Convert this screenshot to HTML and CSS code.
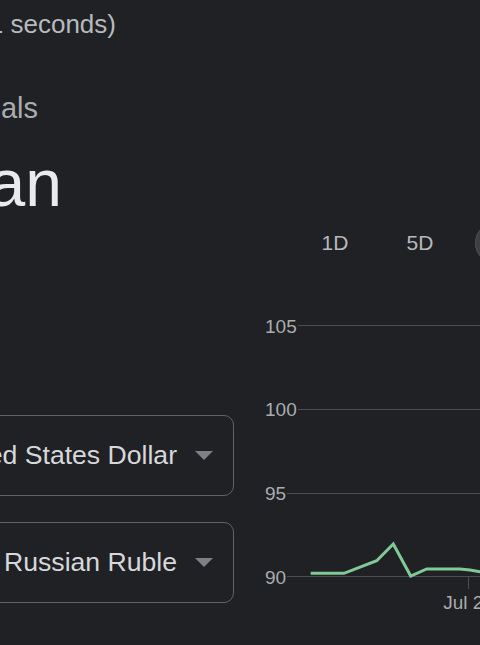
FILE: index.html
```html
<!DOCTYPE html>
<html>
<head>
<meta charset="utf-8">
<link rel="stylesheet" href="styles.css">
</head>
<body>
<div class="page">
  <div class="left">
    <div class="line stats"><span>About 1,240 results (0.41 seconds)</span></div>
    <div class="line equals"><span>1 United States Dollar equals</span></div>
    <div class="line amount"><span>90.35 Russian</span></div>
    <div class="select first">
      <span class="select-text">United States Dollar</span>
      <span class="caret"></span>
    </div>
    <div class="select second">
      <span class="select-text">Russian Ruble</span>
      <span class="caret"></span>
    </div>
  </div>
  <div class="right">
    <div class="periods">
      <span class="period">1D</span>
      <span class="period">5D</span>
      <span class="period active">1M</span>
    </div>
    <svg class="chart" width="240" height="320" viewBox="0 0 240 320">
      <g class="grid">
        <line x1="48" y1="25.5" x2="240" y2="25.5"/>
        <line x1="48" y1="109.5" x2="240" y2="109.5"/>
        <line x1="37" y1="193.5" x2="240" y2="193.5"/>
        <line x1="37" y1="276.5" x2="240" y2="276.5"/>
        <line x1="218.5" y1="277" x2="218.5" y2="289"/>
      </g>
      <g class="labels">
        <text x="15" y="32.8">105</text>
        <text x="15" y="116.3">100</text>
        <text x="15" y="200.3">95</text>
        <text x="15" y="283.8">90</text>
        <text x="218.5" y="308.5" text-anchor="middle">Jul 22</text>
      </g>
      <polyline class="trend" points="60.7,273.3 94,273.3 126.7,260.7 143.3,244 160.7,276 176.7,269 210,269 220,270 230,271.7 240,272"/>
    </svg>
  </div>
</div>
</body>
</html>
```

FILE: styles.css
```css
html, body {
  margin: 0;
  padding: 0;
  background: #202124;
}

body {
  width: 480px;
  height: 645px;
  overflow: hidden;
  font-family: "Liberation Sans", Arial, sans-serif;
}

.page {
  display: flex;
  align-items: flex-start;
}

.left {
  flex: none;
  width: 234px;
  display: flex;
  flex-direction: column;
}

.line {
  display: flex;
  justify-content: flex-end;
  white-space: nowrap;
}

.stats {
  width: 116px;
  margin-top: 9px;
  font-size: 26px;
  line-height: 30px;
  color: #b7babe;
}

.equals {
  width: 38px;
  margin-top: 52px;
  font-size: 29px;
  line-height: 34px;
  color: #a9acb0;
}

.amount {
  width: 62px;
  margin-top: 20px;
  font-size: 66px;
  line-height: 76px;
  color: #e8eaed;
}

.select {
  box-sizing: border-box;
  height: 81px;
  margin-left: -60px;
  border: 1px solid #5f6368;
  border-radius: 10px;
  display: flex;
  justify-content: flex-end;
  align-items: center;
  gap: 18px;
  padding-right: 20px;
  white-space: nowrap;
  font-size: 26.6px;
  color: #d6d8db;
}

.select.first {
  margin-top: 194px;
}

.select.second {
  margin-top: 26px;
}

.caret {
  flex: none;
  width: 0;
  height: 0;
  border-left: 9px solid transparent;
  border-right: 9px solid transparent;
  border-top: 9px solid #7d8186;
}

.right {
  flex: none;
  width: 300px;
  margin-left: 16px;
  display: flex;
  flex-direction: column;
}

.periods {
  margin-top: 223px;
  padding-left: 55px;
  display: flex;
  gap: 25px;
}

.period {
  flex: none;
  width: 60px;
  height: 40px;
  border-radius: 20px;
  display: flex;
  align-items: center;
  justify-content: center;
  font-size: 21px;
  color: #b6b9bd;
}

.period.active {
  background: #3c4043;
  box-shadow: inset 0 0 0 1px #4a4d52;
  color: #e8eaed;
}

.chart {
  display: block;
  margin-top: 37px;
}

.grid line {
  stroke: #4a4d51;
  stroke-width: 1;
}

.labels text {
  font-family: "Liberation Sans", Arial, sans-serif;
  font-size: 19px;
  fill: #a9acb0;
}

.trend {
  fill: none;
  stroke: #81c995;
  stroke-width: 3;
}
```
